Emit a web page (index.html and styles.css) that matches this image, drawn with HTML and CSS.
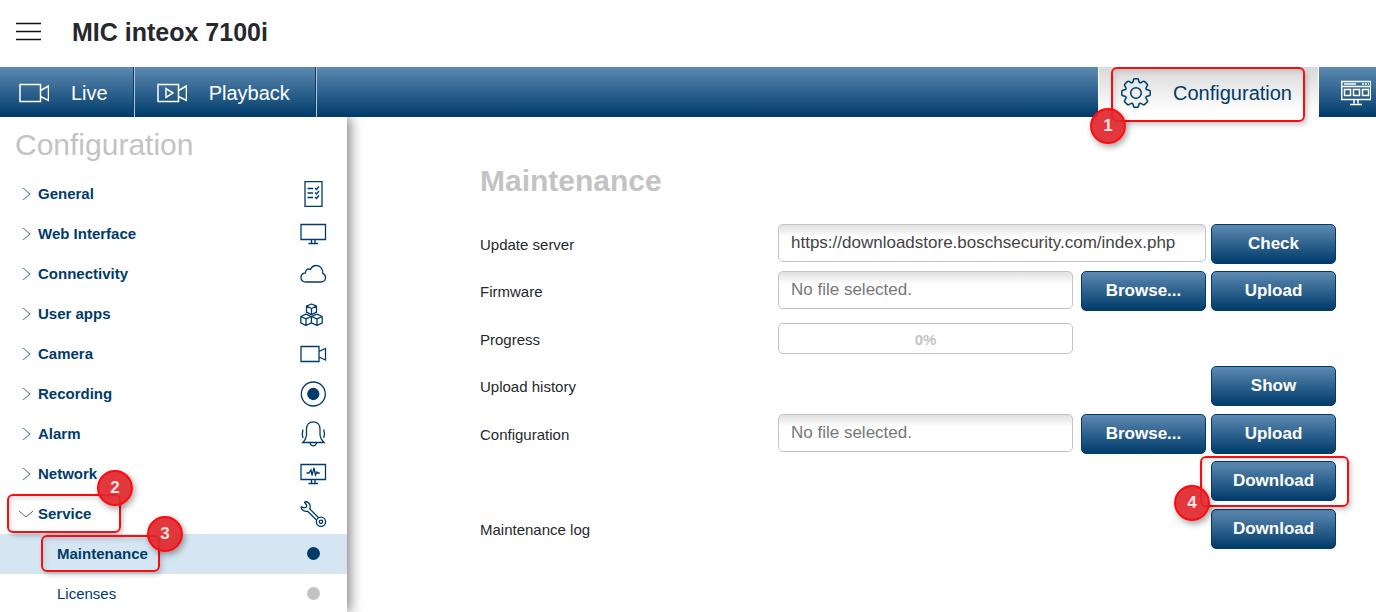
FILE: index.html
```html
<!DOCTYPE html>
<html lang="en">
<head>
<meta charset="UTF-8">
<meta name="viewport" content="width=device-width, initial-scale=1.0">
<title>MIC inteox 7100i</title>
<link rel="stylesheet" href="styles.css">
</head>
<body>
<header class="header">
  <button type="button" class="menu-button" aria-label="Menu">
    <svg width="26" height="20" viewBox="0 0 26 20"><path d="M0 1.500h25M0 9.500h25M0 17.500h25" stroke="#111" stroke-width="1.400"/></svg>
  </button>
  <h1 class="device-name">MIC inteox 7100i</h1>
</header>

<nav class="tabs">
  <a class="tab" href="#live">
    <svg class="tab-icon" viewBox="0 0 30 30"><path d="M1 6.500h20.500v17H1zM21.500 12.500L29.500 8v14.500L21.500 18.500"/></svg>
    Live
  </a>
  <a class="tab" href="#playback">
    <svg class="tab-icon" viewBox="0 0 30 30"><path d="M1 6.500h20.500v17H1zM21.500 12.500L29.500 8v14.500L21.500 18.500M9 10.500v9l7-4.500z"/></svg>
    Playback
  </a>
  <a class="tab tab-active" href="#configuration">
    <svg class="tab-icon" viewBox="0 0 30 30"><circle cx="15" cy="15" r="5.300"/><path d="M12.600 1.500Q12.800.8 13.500.8h3q.7 0 .9.700l.6 2.300q.2.800 1 .9.600.2 1.300-.3l1.800-1q.9-.5 1.600.2l2.400 2.400q.7.700.2 1.600l-1 1.800q-.5.700-.3 1.300.200.800 1 1l2.300.6q.9.200.9.900v3.600q0 .7-.9.900l-2.300.6q-.8.200-1 1-.2.600.3 1.300l1 1.800q.5.900-.2 1.600l-2.400 2.400q-.7.700-1.600.2l-1.800-1q-.7-.5-1.300-.3-.8.200-1 1l-.6 2.300q-.2.700-.9.700h-3q-.7 0-.9-.7L12 26.300q-.2-.8-1-1-.6-.2-1.300.3l-1.800 1q-.9.500-1.600-.2L3.900 24q-.7-.7-.2-1.600l1-1.800q.5-.7.3-1.300-.2-.8-1-1l-2.300-.6Q.8 17.500.8 16.800v-3.600q0-.7.900-.9L4 11.700q.8-.2 1-1 .2-.6-.3-1.300l-1-1.800q-.5-.9.200-1.600l2.400-2.400q.7-.7 1.600-.2l1.800 1q.7.500 1.300.3.800-.2 1-1z" stroke-linejoin="round"/></svg>
    Configuration
    <span class="mark mark-tab"><span class="badge">1</span></span>
  </a>
  <a class="tab tab-dashboard" href="#dashboard" aria-label="Dashboard">
    <svg class="tab-icon" viewBox="0 0 30 30"><path d="M.7 3.500h29v18H.7zM1 8.500h28M3 6h12M21 6h2M24 6h2M27 6h1M3.500 11.500h6v6h-6zM12.500 11.500h6v6h-6zM21.500 11.500h6v6h-6zM13 21.500v4M17 21.500v4M9 26.500h12"/></svg>
  </a>
</nav>

<div class="page">
  <aside class="sidebar">
    <h2 class="sidebar-title">Configuration</h2>
    <ul class="menu">
      <li><a class="menu-item" href="#general">
        <svg class="chevron" viewBox="0 0 16 16"><path d="M5 2l7 6-7 6"/></svg>General
        <svg class="menu-icon" viewBox="0 0 28 28"><path d="M6 1.700h17v24.600H6z"/><path d="M8.500 8.500h5.500M8.500 13h5.500M8.500 17.500h5.500M16 8l1.500 1.500L20 6.500M16 12.500l1.500 1.500L20 11M16 17l1.500 1.500 2.500-3"/></svg>
      </a></li>
      <li><a class="menu-item" href="#web">
        <svg class="chevron" viewBox="0 0 16 16"><path d="M5 2l7 6-7 6"/></svg>Web Interface
        <svg class="menu-icon" viewBox="0 0 28 28"><path d="M2 4.500h24.500v15H2zM12.500 19.500v3.500M16 19.500v3.500M9.500 23.500h9.500"/></svg>
      </a></li>
      <li><a class="menu-item" href="#connectivity">
        <svg class="chevron" viewBox="0 0 16 16"><path d="M5 2l7 6-7 6"/></svg>Connectivity
        <svg class="menu-icon" viewBox="0 0 28 28"><path d="M7 22h14.500c3 0 5-2 5-4.500 0-2-1-3.500-2.700-4.200C24 9 21.500 5.500 17.500 5.500c-3 0-5 1.500-6 4C8.500 8 6.500 10 6.500 12.800 3.500 13.200 2 15 2 17.200 2 20 4 22 7 22z"/></svg>
      </a></li>
      <li><a class="menu-item" href="#apps">
        <svg class="chevron" viewBox="0 0 16 16"><path d="M5 2l7 6-7 6"/></svg>User apps
        <svg class="menu-icon" viewBox="0 0 28 28"><path d="M12.500 4l5 2.200v6l-5 2.500-5-2.500v-6zM7.500 6.200l5 2.300 5-2.300M12.500 8.500v6.200M7 14.200l5.400 2.300v6.300L7 25.500l-5.200-2.700v-6.300zM1.800 16.500L7 18.800l5.400-2.300M7 18.800v6.700M18 14.200l5.200 2.300v6.300L18 25.500l-5.600-2.700M12.400 16.500l5.600-2.300M12.400 16.500l5.600 2.300 5.200-2.300M18 18.800v6.700" stroke-linejoin="round"/></svg>
      </a></li>
      <li><a class="menu-item" href="#camera">
        <svg class="chevron" viewBox="0 0 16 16"><path d="M5 2l7 6-7 6"/></svg>Camera
        <svg class="menu-icon" viewBox="0 0 28 28"><path d="M2 6.500h18v15H2zM20 11.500l6.500-3v11.500L20 17"/></svg>
      </a></li>
      <li><a class="menu-item" href="#recording">
        <svg class="chevron" viewBox="0 0 16 16"><path d="M5 2l7 6-7 6"/></svg>Recording
        <svg class="menu-icon" viewBox="0 0 28 28"><circle cx="14.300" cy="14" r="12"/><circle class="solid" cx="14.300" cy="14" r="5.500"/></svg>
      </a></li>
      <li><a class="menu-item" href="#alarm">
        <svg class="chevron" viewBox="0 0 16 16"><path d="M5 2l7 6-7 6"/></svg>Alarm
        <svg class="menu-icon" viewBox="0 0 28 28"><path d="M3.800 22.500c2.500-2.500 3.700-5 3.700-8.500V9c0-4.500 3-7.200 6.800-7.200S21 4.500 21 9v5c0 3.500 1.500 6 4 8.500zM11 22.800c.5 2 1.500 3 3.300 3s2.800-1 3.300-3M4 9.500c-1 3-1 5.500 0 8.500M24.700 9.500c1 3 1 5.500 0 8.500"/></svg>
      </a></li>
      <li><a class="menu-item" href="#network">
        <svg class="chevron" viewBox="0 0 16 16"><path d="M5 2l7 6-7 6"/></svg>Network
        <svg class="menu-icon" viewBox="0 0 28 28"><path d="M2 4.500h24.500v15H2zM12.500 19.500v3.500M16 19.500v3.500M9.500 23.500h9.500"/><path d="M7.500 13h2.500l2-3 1 5.500 2-7.500 1.500 7 1.500-3 .8 1h2"/></svg>
      </a></li>
      <li><a class="menu-item" href="#service">
        <svg class="chevron" viewBox="0 0 16 16"><path d="M1 5l7 6 7-6"/></svg>Service
        <svg class="menu-icon" viewBox="0 0 28 28"><path d="M5.300 2C8.300 1 11.500 3.300 11.200 7c0 .7-.1 1.300-.4 1.900L19.600 17.700M2 6.500c.2 3.600 3.500 5.600 6.600 4.700l8.900 8.800M5.300 2l2.500 3.300-.7 2-2.500.5L2 6.500"/><circle cx="22" cy="21.800" r="4.600"/><circle cx="22" cy="21.800" r="1.700"/></svg>
        <span class="mark mark-service"><span class="badge">2</span></span>
      </a>
        <ul class="submenu">
          <li><a class="submenu-item submenu-item-active" href="#maintenance">Maintenance<span class="dot"></span><span class="mark mark-maintenance"><span class="badge">3</span></span></a></li>
          <li><a class="submenu-item" href="#licenses">Licenses<span class="dot"></span></a></li>
        </ul>
      </li>
    </ul>
  </aside>

  <main class="content">
    <h2 class="content-title">Maintenance</h2>
    <form class="settings">
      <div class="row">
        <label for="server">Update server</label>
        <div class="field"><input type="text" id="server" value="https://downloadstore.boschsecurity.com/index.php"></div>
        <button type="button" class="button">Check</button>
      </div>
      <div class="row">
        <label for="firmware">Firmware</label>
        <div class="field">
          <input type="text" id="firmware" class="file-name" value="No file selected." readonly>
          <button type="button" class="button">Browse...</button>
        </div>
        <button type="button" class="button">Upload</button>
      </div>
      <div class="row">
        <span id="progress-label">Progress</span>
        <div class="field field-short"><div class="progress" role="progressbar" aria-labelledby="progress-label" aria-valuenow="0">0%</div></div>
      </div>
      <div class="row">
        <span>Upload history</span>
        <div class="field"></div>
        <button type="button" class="button">Show</button>
      </div>
      <div class="row">
        <label for="config">Configuration</label>
        <div class="field">
          <input type="text" id="config" class="file-name" value="No file selected." readonly>
          <button type="button" class="button">Browse...</button>
        </div>
        <button type="button" class="button">Upload</button>
      </div>
      <div class="row">
        <span></span>
        <div class="field"></div>
        <div class="marked">
          <button type="button" class="button">Download</button>
          <span class="mark mark-download"><span class="badge">4</span></span>
        </div>
      </div>
      <div class="row">
        <span>Maintenance log</span>
        <div class="field"></div>
        <button type="button" class="button">Download</button>
      </div>
    </form>
  </main>
</div>
</body>
</html>
```

FILE: styles.css
```css
* {
  box-sizing: border-box;
}

body {
  display: flex;
  flex-direction: column;
  height: 100vh;
  margin: 0;
  overflow: hidden;
  background-color: #fff;
  color: #25282c;
  font-family: "Liberation Sans", Arial, sans-serif;
  font-size: 15px;
}

ul {
  margin: 0;
  padding: 0;
  list-style: none;
}

a {
  color: #003b6a;
  text-decoration: none;
}

svg {
  flex: none;
  fill: none;
}

.header {
  display: flex;
  align-items: center;
  flex: none;
  gap: 30px;
  height: 67px;
  padding: 0 16px 3px;
}

.menu-button {
  display: flex;
  padding: 0;
  border: none;
  background: none;
  cursor: pointer;
}

.device-name {
  margin: 0;
  font-size: 25px;
}

/* top navigation */
.tabs {
  position: relative;
  z-index: 2;
  display: flex;
  flex: none;
  height: 50px;
  background: linear-gradient(#5d8ab2, #003b6a);
}

.tab {
  position: relative;
  display: flex;
  align-items: center;
  gap: 22px;
  padding: 2px 26px 0 22px;
  border-right: 1px solid #b4c6d6;
  box-shadow: inset -1px 0 #0b3c68;
  color: #fff;
  font-size: 20px;
  line-height: 24px;
}

.tab:first-child {
  padding-left: 19px;
}

.tab-icon {
  width: 30px;
  height: 30px;
  stroke: currentColor;
  stroke-width: 1.5;
}

.tab-active {
  margin-left: auto;
  border-left: 1px solid #fff;
  border-right-color: #fff;
  background: linear-gradient(#d9d9d9, #fff 90%);
  box-shadow: none;
  color: #003b6a;
}

.tab-dashboard {
  padding-right: 5px;
  border-right: none;
  box-shadow: none;
}

/* left menu */
.page {
  display: flex;
  flex: 1;
  min-height: 0;
}

.sidebar {
  flex: none;
  width: 347px;
  overflow: hidden;
  background-color: #fff;
  box-shadow: 3px 0 12px rgba(0, 0, 0, 0.5);
}

.sidebar-title {
  height: 57px;
  margin: 0;
  padding-left: 15px;
  color: #c3c3c3;
  font-size: 30px;
  font-weight: normal;
  line-height: 56px;
}

.menu-item,
.submenu-item {
  position: relative;
  display: flex;
  align-items: center;
  height: 40px;
  line-height: 18px;
  padding-bottom: 1px;
}

.menu-item {
  padding-right: 20px;
  padding-left: 18px;
  font-weight: bold;
}

.chevron {
  width: 16px;
  height: 16px;
  margin-right: 4px;
  stroke: #3f6c93;
  stroke-width: 1;
}

.menu-icon {
  width: 28px;
  height: 28px;
  margin-left: auto;
  stroke: #003b6a;
  stroke-width: 1.3;
}

.solid {
  fill: #003b6a;
}

.submenu-item {
  padding-right: 27px;
  padding-left: 57px;
}

.submenu-item-active {
  background-color: #d5e6f2;
  font-weight: bold;
}

.dot {
  width: 13px;
  height: 13px;
  margin-left: auto;
  border-radius: 50%;
  background-color: #c3c3c3;
}

.submenu-item-active .dot {
  background-color: #003b6a;
}

/* maintenance form */
.content {
  flex: 1;
  padding: 46px 40px 0 133px;
}

.content-title {
  margin: 0 0 25px;
  color: #c3c3c3;
  font-size: 30px;
  line-height: 36px;
}

.settings {
  display: flex;
  flex-direction: column;
  gap: 7px;
}

.row {
  display: grid;
  grid-template-columns: 293px 1fr 125px;
  gap: 5px;
  height: 40px;
  line-height: 42px;
}

.row:nth-child(even) {
  height: 41px;
}

.field {
  display: flex;
  align-items: flex-start;
  gap: 8px;
  height: 38px;
}

.field-short {
  align-items: center;
  padding-right: 133px;
}

input {
  flex: 1;
  min-width: 0;
  height: 38px;
  padding: 0 12px;
  border: 1px solid #c3c3c3;
  border-radius: 5px;
  background: linear-gradient(#e0e0e0, #fff 12px);
  color: #444;
  font-family: inherit;
  font-size: 17px;
}

.file-name {
  color: #777;
}

.progress {
  flex: 1;
  height: 31px;
  border: 1px solid #c3c3c3;
  border-radius: 5px;
  color: #c3c3c3;
  font-weight: bold;
  line-height: 31px;
  text-align: center;
}

.button {
  width: 125px;
  height: 40px;
  padding: 0;
  border: 1px solid #003b6a;
  border-radius: 5px;
  background: linear-gradient(#5d8ab2, #003b6a);
  color: #fff;
  font-family: inherit;
  font-size: 17px;
  font-weight: bold;
  cursor: pointer;
}

.marked {
  position: relative;
  display: flex;
  height: 40px;
}

/* numbered step marks */
.mark {
  position: absolute;
  z-index: 1;
  border: 2px solid #fa0c10;
  border-radius: 6px;
  box-shadow: 2px 3px 5px rgba(0, 0, 0, 0.2), inset 2px 3px 5px rgba(0, 0, 0, 0.1);
  pointer-events: none;
}

.badge {
  position: absolute;
  width: 36px;
  height: 36px;
  border: 2px solid #fa0c10;
  border-radius: 50%;
  background-color: rgba(224, 40, 45, 0.93);
  box-shadow: 2px 3px 6px rgba(0, 0, 0, 0.35);
  color: #fbe4e4;
  font-size: 17px;
  font-weight: bold;
  line-height: 32px;
  text-align: center;
}

.mark-tab {
  top: 0;
  right: 13px;
  bottom: -5px;
  left: 12px;
}

.mark-tab .badge {
  bottom: -24px;
  left: -23px;
}

.mark-service {
  top: 0;
  bottom: 1px;
  left: 7px;
  width: 114px;
}

.mark-service .badge {
  top: -26px;
  right: -14px;
}

.mark-maintenance {
  top: 1px;
  bottom: 2px;
  left: 41px;
  width: 119px;
}

.mark-maintenance .badge {
  top: -21px;
  right: -25px;
}

.mark-download {
  top: -5px;
  right: -13px;
  bottom: -6px;
  left: -11px;
}

.mark-download .badge {
  bottom: -16px;
  left: -28px;
}
```
